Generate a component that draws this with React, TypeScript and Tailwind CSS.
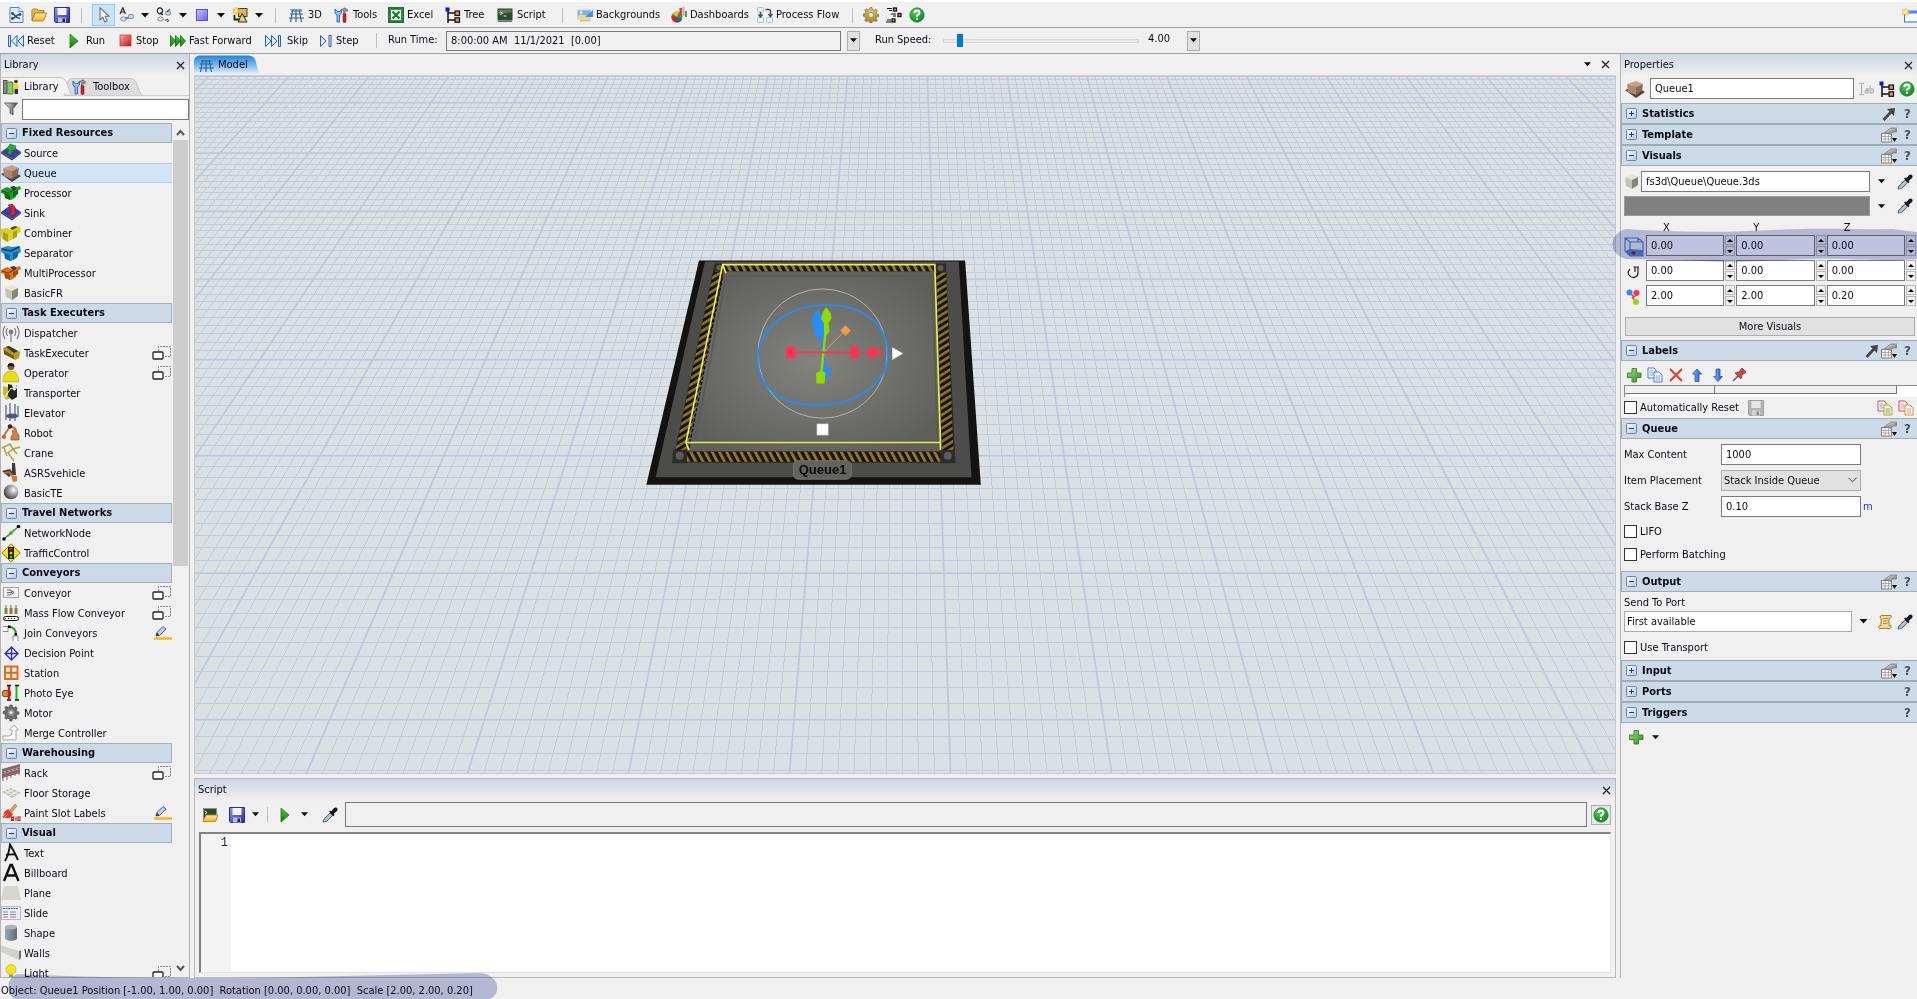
import React from "react";

type Kids = { children?: React.ReactNode };

function Ico({ w = 16, h = 16, vb, children }: Kids & { w?: number; h?: number; vb?: string }) {
  return (
    <svg width={w} height={h} viewBox={vb ?? `0 0 ${w} ${h}`} className="shrink-0" aria-hidden="true">
      {children}
    </svg>
  );
}

/* ---------- shared gradients ---------- */
function Defs() {
  return (
    <svg width="0" height="0" className="absolute" aria-hidden="true">
      <defs>
        <linearGradient id="gBlue" x1="0" y1="0" x2="1" y2="1"><stop offset="0" stopColor="#c4c4ff" /><stop offset="1" stopColor="#6a62e8" /></linearGradient>
        <linearGradient id="gRed" x1="0" y1="0" x2="1" y2="1"><stop offset="0" stopColor="#f6a9a4" /><stop offset="1" stopColor="#c50f12" /></linearGradient>
        <linearGradient id="gGreen" x1="0" y1="0" x2="0" y2="1"><stop offset="0" stopColor="#4fd028" /><stop offset="1" stopColor="#0c7a0c" /></linearGradient>
        <linearGradient id="gPlus" x1="0" y1="0" x2="1" y2="1"><stop offset="0" stopColor="#a6dc8c" /><stop offset="1" stopColor="#2f8f1f" /></linearGradient>
        <linearGradient id="gSave" x1="0" y1="0" x2="1" y2="1"><stop offset="0" stopColor="#8e93f0" /><stop offset="1" stopColor="#2c2f9c" /></linearGradient>
        <linearGradient id="gFold" x1="0" y1="0" x2="0" y2="1"><stop offset="0" stopColor="#ffe9a0" /><stop offset="1" stopColor="#f0b030" /></linearGradient>
        <linearGradient id="gArr" x1="0" y1="0" x2="1" y2="0"><stop offset="0" stopColor="#8fb8f8" /><stop offset="1" stopColor="#1e50c8" /></linearGradient>
        <linearGradient id="gBox" x1="0" y1="0" x2="1" y2="1"><stop offset="0" stopColor="#ffffff" /><stop offset="1" stopColor="#b4c4e4" /></linearGradient>
        <radialGradient id="gBall" cx=".68" cy=".35" r=".75"><stop offset="0" stopColor="#ffffff" /><stop offset=".4" stopColor="#a8a8a8" /><stop offset="1" stopColor="#383838" /></radialGradient>
        <radialGradient id="gHelp" cx=".4" cy=".3" r=".8"><stop offset="0" stopColor="#58d060" /><stop offset="1" stopColor="#067a1c" /></radialGradient>
        <radialGradient id="gGear" cx=".5" cy=".3" r=".8"><stop offset="0" stopColor="#e0cf78" /><stop offset="1" stopColor="#8a6a10" /></radialGradient>
        <radialGradient id="gFloor" cx=".5" cy=".5" r=".6"><stop offset="0" stopColor="#84847f" /><stop offset="1" stopColor="#5e5e5a" /></radialGradient>
        <linearGradient id="gCyl" x1="0" y1="0" x2="1" y2="0"><stop offset="0" stopColor="#9aa6b0" /><stop offset="1" stopColor="#5e6b77" /></linearGradient>
        <linearGradient id="gFun" x1="0" y1="0" x2="1" y2="0"><stop offset="0" stopColor="#f4f4f4" /><stop offset="1" stopColor="#3c3c3c" /></linearGradient>
        <linearGradient id="gGlove" x1="0" y1="0" x2="1" y2="1"><stop offset="0" stopColor="#e8e8e8" /><stop offset="1" stopColor="#6c6c6c" /></linearGradient>
        <pattern id="hatch" width="19" height="19" patternUnits="userSpaceOnUse" patternTransform="rotate(-28)"><rect width="19" height="19" fill="#15130c" /><rect width="9" height="19" fill="#917630" /></pattern>
        <pattern id="hatch2" width="17" height="17" patternUnits="userSpaceOnUse" patternTransform="rotate(58)"><rect width="17" height="17" fill="#15130c" /><rect width="8" height="17" fill="#8c7230" /></pattern>
      </defs>
    </svg>
  );
}

/* ---------- toolbar icons ---------- */
const NewIcon = () => (
  <Ico>
    <path d="M2 .5h9l4 4v11H2z" fill="#dfeefb" stroke="#5a86ac" />
    <path d="M11 .5v4h4" fill="#fff" stroke="#5a86ac" />
    <path d="M4 6.500c3 0 3 5 8 5M4 11.500c3 0 5-5 8-4" stroke="#2e4f6a" strokeWidth="1.500" fill="none" />
    <circle cx="4.500" cy="6.500" r="1.400" fill="#2e4f6a" /><circle cx="12" cy="7.500" r="1.400" fill="#2e4f6a" /><circle cx="4.500" cy="11.500" r="1.400" fill="#2e4f6a" />
  </Ico>
);
const FolderIcon = () => (
  <Ico>
    <path d="M.8 3.500 2 2h4l1.500 1.500H13V6H4L1 13z" fill="#e3b652" stroke="#a87412" strokeWidth=".8" />
    <path d="M4 6h11.500l-3 8H1z" fill="url(#gFold)" stroke="#b07a12" strokeWidth=".8" />
  </Ico>
);
const SaveIcon = ({ gray = false }: { gray?: boolean }) => (
  <Ico>
    <path d="M.5.5h15v15h-14l-1-1z" fill={gray ? "#b4b4b4" : "url(#gSave)"} stroke={gray ? "#a0a0a0" : "#2c2f8c"} />
    <rect x="3.500" y="1" width="9" height="7" fill={gray ? "#e8e8e8" : "#f4f6ff"} />
    <path d="M4 10.500h8v5H4z" fill={gray ? "#d6d6d6" : "#b9bcd8"} />
    <rect x="8.500" y="11.500" width="2.500" height="3.500" fill={gray ? "#8c8c8c" : "#22244c"} />
  </Ico>
);
const CursorIcon = () => (
  <Ico><path d="M4 .8v12l2.800-2.600 2 4.800 2.300-1-2-4.700H13z" fill="#fff" stroke="#6b7079" strokeWidth="1.100" /></Ico>
);
const ConnectIcon = ({ letter }: { letter: "A" | "Q" }) => (
  <Ico>
    {letter === "A"
      ? <path d="M1 7 3.800.8 6.500 7M2 5h3.600" stroke="#222" fill="none" strokeWidth="1.200" />
      : <path d="M6.500 3.800a2.600 3 0 1 1-5.200 0 2.600 3 0 1 1 5.200 0M4.500 5.500 6.800 8" stroke="#222" fill="none" strokeWidth="1.200" />}
    <ellipse cx="4.500" cy="12" rx="2.800" ry="2.100" fill="#dde4ec" stroke="#7f8fa3" />
    <ellipse cx="12" cy={letter === "A" ? 9.5 : 6} rx="2.800" ry="2.200" fill="#cfd9e6" stroke="#7f8fa3" />
    {letter === "A"
      ? <path d="M6.500 11.500 10 10.500" stroke="#6b7d94" strokeWidth="2" />
      : <path d="M9 13.500 12 12m-1 3 2-2m-2-8 3-3" stroke="#555" strokeWidth="1.100" />}
  </Ico>
);
const SquareIcon = () => <Ico><rect x="2.500" y="2.500" width="11" height="11" fill="url(#gBlue)" stroke="#5a52c8" /></Ico>;
const ShapesIcon = () => (
  <Ico>
    <rect x="6.500" y="1.500" width="8.500" height="8" fill="#d9b36a" stroke="#5b4215" />
    <path d="M10 6.500l5 8.500H6z" fill="#e8cc8c" stroke="#3b2a0c" />
    <path d="M2.500 8v4.500h5" fill="none" stroke="#222" strokeWidth="1.800" />
    <path d="m4 0 1 2.500L7.500 2 6 4l1.500 2L5 5.500 4 8 3 5.500.5 6 2 4 .5 2 3 2.500z" fill="#ffe46a" stroke="#e0a820" strokeWidth=".6" />
  </Ico>
);
const GridIcon = () => (
  <Ico>
    <path d="M3 4h11M2 7h13M1 11h15M5 2 2.500 15M8 2v13M11 2l2.500 13" stroke="#2f6299" strokeWidth="1.200" fill="none" />
    <path d="M2 2.500h12" stroke="#6fa0cc" />
  </Ico>
);
const ToolsIcon = () => (
  <Ico>
    <path d="M2 2v4l2 2v7h2.500V8l2-2V2L7 4.500H4z" fill="#9cc0f0" stroke="#2c5fae" strokeWidth=".9" />
    <path d="M8.500 2.500 12 .8l3 2.200-1 1.800-2-1v3h-1.500v-3z" fill="#8d9299" stroke="#555" strokeWidth=".5" />
    <rect x="10" y="6.500" width="3" height="9" rx="1" fill="#c8202a" stroke="#7c1016" strokeWidth=".5" />
  </Ico>
);
const ExcelIcon = () => (
  <Ico>
    <rect x=".8" y=".8" width="14.500" height="14.500" fill="#3e8f4b" stroke="#1f6a30" strokeWidth="1.500" />
    <rect x="3" y="3" width="10" height="10" fill="#eaf6ea" />
    <path d="m4.500 4.500 7 7m0-7-7 7" stroke="#1f7a35" strokeWidth="2.200" />
  </Ico>
);
const TreeIcon = () => (
  <Ico>
    <path d="M3 4v12M3 6h7M3 13h7" stroke="#111" strokeWidth="1.500" fill="none" />
    <rect x=".5" y=".5" width="4" height="4" fill="#0b10ee" />
    <rect x="10" y="4" width="4.500" height="4.500" fill="#c99b5e" stroke="#111" strokeWidth="1.200" />
    <rect x="10" y="10.800" width="4.500" height="4.500" fill="#c99b5e" stroke="#111" strokeWidth="1.200" />
  </Ico>
);
const ScriptIcon = () => (
  <Ico>
    <rect x=".5" y="1.500" width="15" height="12" rx="1" fill="#2c4a2e" stroke="#8f958f" />
    <path d="M1.500 2.500h13v3c-5 0-8 2-13 2z" fill="#5d7a5e" />
    <path d="m3 4.500 2.500 1.800L3 8M6.500 9h3" stroke="#e8f4e8" fill="none" />
    <path d="M1 14.500h14" stroke="#666" />
  </Ico>
);
const BackIcon = () => (
  <Ico>
    <rect x=".5" y="3" width="13" height="9" fill="#7fb2ea" stroke="#bcd4ee" />
    <path d="M1 9c4-3 6 1 12-2v5H1z" fill="#f2d88c" />
    <circle cx="4" cy="5.500" r="1.300" fill="#fff" />
    <path d="m8 10 8-7v7z" fill="#4f8fd8" /><path d="M3 13.500h10" stroke="#e6b84c" strokeWidth="1.500" />
  </Ico>
);
const DashIcon = () => (
  <Ico>
    <circle cx="6" cy="10" r="5.500" fill="#2a9d3c" />
    <path d="M6 10 1.500 6.500A5.500 5.500 0 0 1 8 4.800z" fill="#f2c12e" />
    <path d="M6 10v5.500A5.500 5.500 0 0 1 .5 9z" fill="#d4202a" /><path d="M6 10v5.500c2 0 4-1 5-3z" fill="#2b57c4" />
    <rect x="8.500" y="1" width="2.500" height="7" fill="#e23b3b" /><rect x="11.500" y="0" width="2" height="9" fill="#f29a9a" /><rect x="14" y="4" width="2" height="6" fill="#3aa655" />
  </Ico>
);
const FlowIcon = () => (
  <Ico>
    <rect x=".5" y=".5" width="6" height="4.500" rx="1" fill="#e4f3f6" stroke="#9fc3ca" />
    <rect x=".5" y="10.500" width="6" height="5" rx="1" fill="#e4f3f6" stroke="#9fc3ca" />
    <rect x="9.500" y="10.500" width="6" height="5" rx="1" fill="#e4f3f6" stroke="#9fc3ca" />
    <path d="M3.500 5v5m-2-2.500 2 2.500 2-2.500M8.500 2.500H12q1.500 0 1.500 2V9m-2-2 2 2.500L15.500 7" stroke="#4a4f55" fill="none" strokeWidth="1.500" />
  </Ico>
);
const gearPath = "M7 .5h2l.5 2 1.600.7 1.800-1 1.400 1.400-1 1.800.7 1.600 2 .5v2l-2 .5-.7 1.600 1 1.800-1.400 1.400-1.800-1-1.600.7-.5 2H7l-.5-2-1.600-.7-1.800 1-1.400-1.400 1-1.800L2 9.500l-2-.5v-2l2-.5.7-1.600-1-1.800 1.400-1.400 1.800 1L6.500 2.500z";
const GearIcon = () => <Ico><path d={gearPath} fill="url(#gGear)" stroke="#8f7526" strokeWidth=".6" /><circle cx="8" cy="8" r="2.600" fill="#f0f0f0" stroke="#7d6518" strokeWidth=".6" /></Ico>;
const SpeedIcon = () => (
  <Ico>
    <path d="M1 1.500h5M3 3.500h3M5 7h5M7 9h3M1 13h4M0 15h5" stroke="#111" />
    <rect x="7.500" y="1" width="3" height="3" fill="#e0a860" stroke="#111" strokeWidth="1.300" /><rect x="12" y="6.500" width="3" height="3" fill="#e0a860" stroke="#111" strokeWidth="1.300" /><rect x="6" y="12" width="3" height="3" fill="#e0a860" stroke="#111" strokeWidth="1.300" />
  </Ico>
);
const HelpIcon = () => (
  <Ico><circle cx="8" cy="8" r="7.200" fill="url(#gHelp)" stroke="#0a7a20" strokeWidth=".6" /><path d="M5.500 6q0-2.500 2.500-2.500T10.500 6Q10.500 7.200 8 8.600v1.200M8 11v2" stroke="#fff" strokeWidth="1.900" fill="none" /></Ico>
);
const WindowIcon = () => (
  <Ico w={15} h={15}>
    <rect x="2.500" y="4" width="14" height="10" fill="#f2f6fd" stroke="#4d6fb0" /><path d="M5 4h10" stroke="#4f86e8" strokeWidth="3" />
    <path d="m3.500 0 .8 2 2.200-.8-.8 2 2 .8-2 .8.800 2.200-2.200-.8-.8 2-.8-2-2.200.8.800-2.200-1.500-.8 1.500-.8L.5 1.200l2.200.8z" fill="#ffe878" stroke="#e0b83c" strokeWidth=".5" />
  </Ico>
);

const bar = { fill: "#dcebff", stroke: "#2a5fc0", strokeWidth: 1 };
const ResetIcon = () => <Ico><path d="M.5 2.500h2v11h-2zM9 2.500v11L3.500 8zM15.500 2.500v11L10 8z" {...bar} /></Ico>;
const RunIcon = () => <Ico w={10} h={16}><path d="m1 1 8 7-8 7z" fill="url(#gGreen)" stroke="#0b6a10" strokeWidth=".7" /></Ico>;
const StopIcon = () => <Ico w={13} h={14}><rect x="1" y="1" width="11" height="11" fill="url(#gRed)" stroke="#b83a3a" strokeWidth=".7" /></Ico>;
const FFIcon = () => <Ico><path d="m.5 2.500 5 5.500-5 5.500zM5.500 2.500l5 5.500-5 5.500zM10.500 2.500l5 5.500-5 5.500z" fill="url(#gGreen)" stroke="#0b6a10" strokeWidth=".8" /></Ico>;
const SkipIcon = () => <Ico><path d="M.5 2.500 6 8 .5 13.500zM6.500 2.500 12 8l-5.500 5.500zM13.500 2.500h2v11h-2z" {...bar} /></Ico>;
const StepIcon = () => <Ico w={12} h={16}><path d="M.5 2.500 6 8 .5 13.500zM9 2.500h2v11H9z" {...bar} /></Ico>;
const Caret = ({ w = 8 }: { w?: number }) => <Ico w={w} h={5} vb="0 0 8 5"><path d="M0 0h8L4 4.500z" fill="#111" /></Ico>;
const Cross = () => <Ico w={9} h={9}><path d="m1 1 7 7m0-7L1 8" stroke="#222" strokeWidth="1.300" /></Ico>;
const Filter = () => <Ico w={14} h={14}><path d="M.5 1h13L9 6.500V13L6 11V6.500z" fill="url(#gFun)" stroke="#555" strokeWidth=".9" /></Ico>;
const BooksIcon = () => (
  <Ico>
    <rect x=".5" y="1.500" width="3.500" height="13" fill="#8a8d90" stroke="#505356" /><rect x="4" y="3" width="6" height="12" rx="1" fill="#8cc46a" stroke="#4c7c34" />
    <circle cx="13" cy="2.500" r="1.800" fill="#4a3018" /><path d="M10.500 5h5v5h-5z" fill="#f4d81e" /><path d="M11.500 10h3.500v5h-3.500z" fill="#2a3452" />
  </Ico>
);
const Dropper = () => (
  <Ico>
    <path d="m1 15 1-3 6-6 2.500 2.500-6 6z" fill="#aebfce" stroke="#4e5b68" strokeWidth=".9" />
    <path d="m7 4.500 1.500-1 1 .8L12 1q2-1.200 3.200.2Q16 2.500 15 4l-3.200 2.800.7 1.200-1.200 1.200z" fill="#15171a" />
  </Ico>
);

/* ---------- library icons, 20 x 20 each ---------- */
const machine = (a: string, b: string, d: string) => (
  <>
    <path d="M0 7 6 4l5 2 8-3 1 3-4 2-1 6-5 3-6-2-1-4-3-1z" fill={a} />
    <path d="m4 10 5 2v5l-5-2zM12 9l5-2v4l-5 3z" fill={b} />
    <path d="m9 4 4-1 3 2-4 2z" fill={d} /><path d="m1 8 6 2 8-4" stroke={d} fill="none" strokeWidth=".9" />
  </>
);
const pad = <><path d="M0 9 10 2l10 7-9 7z" fill="#3c3ea6" /><path d="m0 9 11 7 9-7v1.500l-9 7-11-7z" fill="#3b3b3b" /></>;
const boxArt = (
  <>
    <path d="M0 11 10 7l10 6-9 6z" fill="#4b4542" />
    <path d="m2 5 9-3 7 3-7 3z" fill="#c79f89" /><path d="m2 5 9 3v8l-8-3z" fill="#b08871" /><path d="m18 5-7 3v8l6-4z" fill="#8e6b57" />
  </>
);
const cubeArt = <><path d="m4 5 7-3 6 3-6 3z" fill="#e4e4d8" /><path d="m4 5 7 3v9l-6-3z" fill="#c4c4b6" /><path d="m17 5-6 3v9l6-4z" fill="#84847a" /></>;
const art: Record<string, React.ReactNode> = {
  Source: <>{pad}<path d="M7 11 8 6 5 7l4-6 6 2-1 4-3 0-1 4z" fill="#2ea838" stroke="#137a1e" strokeWidth=".5" /></>,
  Queue: boxArt,
  Processor: machine("#1d9a2a", "#0c6a16", "#2b3a2b"),
  Sink: <>{pad}<path d="m7 2 4-1 3 3v5l2 0-4 4-4-3 2-1V5z" fill="#d8252c" stroke="#8c1014" strokeWidth=".5" /></>,
  Combiner: <><path d="m0 6 6-1 3 2 10-4 1 6-5 2-1 4-8 4-5-3-1-5z" fill="#d8d21c" /><path d="m2 9 5 2v8l-5-3zM12 9l4-2v7l-4 2z" fill="#aaa20c" /><path d="m9 5 5-2 3 1-6 3z" fill="#4b4a20" /></>,
  Separator: <><path d="m0 5 7-2 4 1 8-1 1 6-3 2-1 4-6 3-6-2-1-5-3-2z" fill="#1f93cf" /><path d="m4 10 5 2v6l-5-3zM12 10l5-2v5l-5 4z" fill="#0d6aa4" /><path d="m1 6 9 2 8-4" stroke="#14384e" strokeWidth="1.500" fill="none" /></>,
  MultiProcessor: machine("#d9701a", "#a04c08", "#4a3626"),
  BasicFR: cubeArt,
  Dispatcher: <g fill="none" stroke="#7d7d7d" strokeWidth="1.200"><path d="M4 3Q0 9 4 16M16 3q4 6 0 13M6.500 5q-2.500 4 0 8M13.500 5q2.500 4 0 8M10 10v9" /><circle cx="10" cy="9" r="1.800" fill="#7d7d7d" /></g>,
  TaskExecuter: <><path d="m2 5 5-2 12 6-1 6-4 2L3 11z" fill="#b89a1e" /><path d="m5 4 3-1 9 5-4 2z" fill="#3a3730" /><path d="m3 7 10 6v3L3 11z" fill="#6e5c14" /></>,
  Operator: <><circle cx="10" cy="4" r="3.200" fill="#8a5a3a" /><path d="M6.500 4q0-4 3.500-4t3.500 4q-3-2-7 0z" fill="#20160f" /><path d="M2 19q0-9 5-10.500h6Q17 10 18 19z" fill="#e6dc1a" stroke="#a89e08" strokeWidth=".5" /></>,
  Transporter: <><path d="m2 3 8 2v10l-5 2-3-6z" fill="#c6b92a" /><path d="M7 1v12l4 4 5-3V2l-3 6-2-6z" fill="#262622" /><path d="m4 14 6-9 4 2 3-5" stroke="#fff" fill="none" /></>,
  Elevator: <><path d="M5 2v15M9 0v18M14 1v17M17 3v11" stroke="#5c6c96" strokeWidth="1.300" /><ellipse cx="11" cy="13" rx="6" ry="2.500" fill="#4e5870" /></>,
  Robot: <><path d="m2 14 6-9M9 3l6 3" stroke="#c8763a" strokeWidth="2.200" /><path d="m11 8 4-2 1 4 2 2v5h-8v-3l2-3z" fill="#d08040" stroke="#7e4316" strokeWidth=".6" /><circle cx="9" cy="3.500" r="2.300" fill="#3a2a20" /><circle cx="3" cy="14" r="2" fill="#e05030" /></>,
  Crane: <path d="M1 5 9 1l3 5 7-2M3 5l3 8M12 6l-5 4 6 8M12 6l4 5" stroke="#b3a23c" strokeWidth="1.500" fill="none" />,
  ASRSvehicle: <><path d="M11 0h3l1 12h-4zM1 8l8-2 3 4-4 4z" fill="#3b3b3b" /><path d="m10 12 6 1v5l-4 1z" fill="#d0762e" /><path d="m3 10 5-1 3 3" stroke="#c26f30" strokeWidth="2" fill="none" /></>,
  BasicTE: <circle cx="10" cy="9" r="7.300" fill="url(#gBall)" />,
  NetworkNode: <><path d="M3 16 18 3" stroke="#222" /><path d="M6 13.500 14 6.500" stroke="#4fae3c" strokeWidth="2" /><circle cx="3" cy="16" r="1.800" /><circle cx="17.500" cy="3.500" r="1.800" /><circle cx="10" cy="10" r="1.800" fill="#46a832" /></>,
  TrafficControl: <><path d="m10 .8 9 9-9 9-9-9z" fill="#efe718" stroke="#7f7a06" /><rect x="7" y="4" width="6" height="12" fill="#1b1b1b" /><circle cx="10" cy="6" r="1.500" fill="#e41a1a" /><circle cx="10" cy="10" r="1.500" fill="#f0c018" /><circle cx="10" cy="14" r="1.500" fill="#1fc81f" /></>,
  Conveyor: <><rect x="2.500" y="4.500" width="15" height="10" fill="#f4f4f4" stroke="#a5a5a5" /><path d="M6 7h3l4 2.500L9 12H6M9 7l4 2.500M6 9.500h5" stroke="#666" fill="none" /></>,
  "Mass Flow Conveyor": <><path d="M5 2v8M10 2v8M15 2v8" stroke="#7d6a3a" strokeWidth="1" /><path d="M3.500 5h3v6h-3zM8.500 5h3v6h-3zM13.500 5h3v6h-3z" fill="#8f7a45" /><rect x="2.500" y="13.500" width="15" height="4" rx="2" fill="#fff" stroke="#111" /><path d="M4 15.500h12" stroke="#111" strokeDasharray="1 2" /></>,
  "Join Conveyors": <><path d="M2 3.500h5v5H2M12 18v-5h5v5" fill="#fff" stroke="#8a8a8a" /><path d="M8 4q7 0 7 8" stroke="#22a022" strokeWidth="2" fill="none" /><rect x="7" y="2.500" width="2.500" height="2.500" /><rect x="13.500" y="10" width="2.500" height="2.500" /></>,
  "Decision Point": <path d="m10.500 4 6.500 6.500-6.500 6.500L4 10.500zM10.500 4v13M4 10.500h13" stroke="#2430c8" fill="none" strokeWidth="1.300" />,
  Station: <path d="M4 3.500h12.500v12.500H4zM10.200 3.500v12.500M4 9.800h12.500" stroke="#e86a10" strokeWidth="2" fill="none" />,
  "Photo Eye": <><rect x="1.500" y="7.500" width="8" height="6" rx="1.500" fill="#c09448" stroke="#7b5820" /><path d="M8 3v13" stroke="#d41818" strokeWidth="2.500" /><path d="M15.500 3v14" stroke="#22b822" strokeWidth="2" /><path d="M6 2.500h4M14 2.500h4M6 17h4M14 17h4" stroke="#111" strokeWidth="1.500" /></>,
  Motor: <g transform="translate(2 1.500)"><path d={gearPath} fill="#6c6c6c" stroke="#444" strokeWidth=".6" /><circle cx="8" cy="8" r="3.500" fill="#8e8e8e" /><circle cx="8" cy="8" r="1.600" fill="#e8e8e8" /></g>,
  "Merge Controller": <path d="M2 13h6q3 0 3-4V7H8.500L13 2l4.500 5H15v10h-4q-1-1-3 0H2z" fill="#fbfbfb" stroke="#a8a8a8" />,
  Rack: <><path d="m1 6 18-5v3L1 9zM1 11l18-5v3L1 14z" fill="#7d6a64" /><path d="M2 6v12M6 5v12M10 4v11M14 3v10M18 2v10" stroke="#5f6f9c" /><path d="m1 10 18-5M1 14.500l18-5" stroke="#a8422e" /></>,
  "Floor Storage": <><path d="m1 9 9-4 10 5-9 5z" fill="#c2c2ba" /><path d="m4 8 10 5M7 6.500l10 5M4 11l9-5M8 13l9-5" stroke="#f4f4f0" /></>,
  "Paint Slot Labels": <><path d="m9 7 5-6 2 2-5 6z" fill="#d9a05a" stroke="#8e5c1c" strokeWidth=".5" /><path d="m3 9 4-3 5 5-3 4-7 0z" fill="#e83a28" /><path d="m1 14 4-4M3 15l4-4" stroke="#f6a090" /><g fill="none" stroke="#cc1c1c" strokeWidth="1.100"><rect x="10.500" y="14" width="2" height="3.500" /><path d="M15 13.500V18" /><rect x="17" y="14" width="2" height="3.500" /></g></>,
  Text: <path d="M4 18q4-7 5-16.500Q13 8 17 17M5 12q5-1 9-.5" stroke="#111" fill="none" strokeWidth="1.900" />,
  Billboard: <path d="M3 18 9.500 2h1.500L17.500 18M5.500 12.500h9.500" stroke="#111" fill="none" strokeWidth="2.400" />,
  Plane: <path d="M3 3h14l3 14H0z" fill="#d6d6cf" />,
  Slide: <><rect x=".5" y="3.500" width="19" height="13" fill="#ececf6" stroke="#b8b8cc" /><path d="M2 5.500h15" stroke="#555a78" strokeDasharray="2 .6" /><path d="M2 9h5M9 9h6M2 11.500h5M9 11.500h6M2 14h5M9 14h6" stroke="#83869c" /></>,
  Shape: <><path d="M4 4v12q6 4 12 0V4z" fill="url(#gCyl)" /><ellipse cx="10" cy="4" rx="6" ry="2.300" fill="#a8b4be" /></>,
  Walls: <><path d="m0 2 18 6v9L0 9z" fill="#d2d2cf" /><path d="m18 8 2-1v8l-2 2z" fill="#6e6e6a" /><path d="m0 2 2-1 18 6-2 1z" fill="#f0f0ee" /></>,
  Light: <><circle cx="10" cy="6.500" r="5" fill="#f2ea10" stroke="#b0a808" strokeWidth=".6" /><rect x="8" y="11.500" width="4" height="5" fill="#9a9a9a" /></>,
};

const CopyTag = () => <Ico w={20} h={16}><path d="M6.500 6V1.500h12v10h-6" fill="none" stroke="#888" strokeDasharray="2 1" /><rect x="1" y="7" width="10" height="7" rx="1" fill="#fff" stroke="#222" strokeWidth="1.300" /></Ico>;
const PenTag = () => <Ico w={20} h={16}><path d="m4 11 1-3.500 6-6 3 2.500-6.500 6.500z" fill="#b8cff0" stroke="#4c5f80" /><path d="m4 11 1-3.500 2.500 3z" fill="#333" /><path d="M2 13.500h18" stroke="#ffb010" strokeWidth="2.400" /></Ico>;

type Group = { title: string; items: [string, ("copy" | "pen")?][] };
const groups: Group[] = [
  { title: "Fixed Resources", items: [["Source"], ["Queue"], ["Processor"], ["Sink"], ["Combiner"], ["Separator"], ["MultiProcessor"], ["BasicFR"]] },
  { title: "Task Executers", items: [["Dispatcher"], ["TaskExecuter", "copy"], ["Operator", "copy"], ["Transporter"], ["Elevator"], ["Robot"], ["Crane"], ["ASRSvehicle"], ["BasicTE"]] },
  { title: "Travel Networks", items: [["NetworkNode"], ["TrafficControl"]] },
  { title: "Conveyors", items: [["Conveyor", "copy"], ["Mass Flow Conveyor", "copy"], ["Join Conveyors", "pen"], ["Decision Point"], ["Station"], ["Photo Eye"], ["Motor"], ["Merge Controller"]] },
  { title: "Warehousing", items: [["Rack", "copy"], ["Floor Storage"], ["Paint Slot Labels", "pen"]] },
  { title: "Visual", items: [["Text"], ["Billboard"], ["Plane"], ["Slide"], ["Shape"], ["Walls"], ["Light", "copy"]] },
];

const Fold = ({ open }: { open: boolean }) => (
  <Ico w={11} h={11}>
    <rect x=".5" y=".5" width="10" height="10" rx="1" fill="url(#gBox)" stroke="#6f83a8" />
    <path d={open ? "M3 5.500h5" : "M3 5.500h5M5.500 3v5"} stroke="#1c3c78" />
  </Ico>
);

/* ---------- toolbars ---------- */
const Sep = ({ c }: { c: string }) => <span className={`h-[15px] w-px shrink-0 bg-[#bdbdbd] ${c}`} />;

function Tool({ c = "", label, text, children }: Kids & { c?: string; label?: string; text?: string }) {
  return (
    <button type="button" aria-label={label} className={`flex h-[22px] shrink-0 items-center gap-1 whitespace-nowrap ${c}`}>
      {children}
      {text && <span>{text}</span>}
    </button>
  );
}

function MainToolbar() {
  return (
    <div className="flex h-[26px] items-center border-b border-[#a0a0a0] pt-[1px]">
      <Tool c="ml-2 w-[23px]" label="New"><NewIcon /></Tool>
      <Tool c="w-[23px]" label="Open"><FolderIcon /></Tool>
      <Tool c="w-[27px]" label="Save"><SaveIcon /></Tool>
      <Sep c="mr-[10px]" />
      <Tool c="w-[23px] justify-center border border-[#90c8f6] bg-[#cce4f7]" label="Select"><CursorIcon /></Tool>
      <Tool c="ml-[4px] w-[37px] !gap-[6px]" label="Connect"><ConnectIcon letter="A" /><Caret /></Tool>
      <Tool c="w-[38px] !gap-[7px]" label="Disconnect"><ConnectIcon letter="Q" /><Caret /></Tool>
      <Tool c="w-[38px] !gap-[7px]" label="Create box"><SquareIcon /><Caret /></Tool>
      <Tool c="w-[43px] !gap-[7px]" label="Create shape"><ShapesIcon /><Caret /></Tool>
      <Sep c="mr-[12px]" />
      <Tool c="w-[45px]" text="3D"><GridIcon /></Tool>
      <Tool c="w-[55px]" text="Tools"><ToolsIcon /></Tool>
      <Tool c="w-[57px] !gap-[3px]" text="Excel"><ExcelIcon /></Tool>
      <Tool c="w-[52px] !gap-[3px]" text="Tree"><TreeIcon /></Tool>
      <Tool c="w-[65px]" text="Script"><ScriptIcon /></Tool>
      <Sep c="mr-[14px]" />
      <Tool c="w-[94px] !gap-[3px]" text="Backgrounds"><BackIcon /></Tool>
      <Tool c="w-[86px] !gap-[3px]" text="Dashboards"><DashIcon /></Tool>
      <Tool c="w-[95px] !gap-[3px]" text="Process Flow"><FlowIcon /></Tool>
      <Sep c="mr-[10px]" />
      <Tool c="w-[23px]" label="Global preferences"><GearIcon /></Tool>
      <Tool c="w-[23px]" label="Fast rendering"><SpeedIcon /></Tool>
      <Tool label="Help"><HelpIcon /></Tool>
      <Tool c="ml-auto" label="Window"><WindowIcon /></Tool>
    </div>
  );
}

function RunToolbar() {
  return (
    <div className="flex h-[26px] items-center border-b border-[#a0a0a0]">
      <Tool c="ml-2 w-[61px] !gap-[3px]" text="Reset"><ResetIcon /></Tool>
      <Tool c="w-[50px] !gap-[7px]" text="Run"><RunIcon /></Tool>
      <Tool c="w-[51px]" text="Stop"><StopIcon /></Tool>
      <Tool c="w-[95px] !gap-[3px]" text="Fast Forward"><FFIcon /></Tool>
      <Tool c="w-[55px] !gap-[6px]" text="Skip"><SkipIcon /></Tool>
      <Tool c="w-[56px]" text="Step"><StepIcon /></Tool>
      <Sep c="mr-[11px]" />
      <label htmlFor="runtime" className="w-[58px] shrink-0 pb-[1px]">Run Time:</label>
      <input id="runtime" defaultValue="8:00:00 AM  11/1/2021  [0.00]" className="h-[20px] w-[395px] whitespace-pre border border-[#7a7a7a] bg-[#f0f0f0] px-1 outline-none" />
      <button type="button" aria-label="Run time options" className="ml-[6px] flex h-[20px] w-[13px] items-center justify-center border border-[#adadad] bg-[#e1e1e1]"><Caret w={7} /></button>
      <label htmlFor="speed" className="ml-[15px] w-[68px] shrink-0 pb-[1px]">Run Speed:</label>
      <input
        id="speed" type="range" min={0} max={100} defaultValue={7}
        className="h-[14px] w-[196px] appearance-none bg-transparent [&::-webkit-slider-runnable-track]:h-[4px] [&::-webkit-slider-runnable-track]:border [&::-webkit-slider-runnable-track]:border-[#d6d6d6] [&::-webkit-slider-runnable-track]:bg-[#e7eaea] [&::-webkit-slider-thumb]:mt-[-6px] [&::-webkit-slider-thumb]:h-[13px] [&::-webkit-slider-thumb]:w-[6px] [&::-webkit-slider-thumb]:appearance-none [&::-webkit-slider-thumb]:bg-[#0078d7]"
      />
      <span className="ml-[9px] w-[39px] pb-[3px]">4.00</span>
      <button type="button" aria-label="Run speed options" className="flex h-[20px] w-[13px] items-center justify-center border border-[#adadad] bg-[#e1e1e1]"><Caret w={7} /></button>
    </div>
  );
}

function PanelTitle({ text }: { text: string }) {
  return (
    <div className="flex h-[22px] shrink-0 items-center justify-between bg-linear-to-b from-[#cdd6e6] to-[#f0f0f0] pr-[4px] pl-[3px]">
      <h2>{text}</h2>
      <button type="button" aria-label={`Close ${text}`}><Cross /></button>
    </div>
  );
}

/* ---------- left panel ---------- */
function Library() {
  return (
    <aside className="flex w-[190px] shrink-0 flex-col border-x border-b border-[#b4b4b4]">
      <PanelTitle text="Library" />
      <div className="relative flex h-[20px] shrink-0 items-end" role="tablist">
        <svg width="188" height="20" className="absolute inset-0" aria-hidden="true">
          <path d="M63 19.500C67 10 66 2.500 71 2.500h58c6 0 6 5 8 9s2 8 6 8z" fill="#dcdcdc" stroke="#c4c4c4" />
          <path d="M0 1.500h58c7 0 7 5 9 9s2 9 5 9" fill="#f4f4f4" stroke="#c4c4c4" />
          <path d="M72 19.500h116" stroke="#d0d0d0" />
        </svg>
        <button type="button" role="tab" aria-selected="true" className="relative flex h-[18px] w-[70px] items-center gap-[5px] pl-[2px]"><BooksIcon />Library</button>
        <button type="button" role="tab" aria-selected="false" className="relative flex h-[18px] items-center gap-[6px]"><ToolsIcon />Toolbox</button>
      </div>
      <label className="flex h-[26px] shrink-0 items-center gap-[4px] pl-[3px]">
        <Filter />
        <input aria-label="Filter" className="h-[21px] min-w-0 flex-1 border border-[#7a7a7a] bg-white px-1 outline-none" />
      </label>
      <div className="flex min-h-0 flex-1 pt-[1px]">
        <div className="w-[171px] overflow-y-auto [scrollbar-width:none]">
          {groups.map((g) => (
            <section key={g.title}>
              <h3 className="flex h-[20px] items-center gap-[5px] border border-[#a3afbb] bg-[#ccd9e7] pl-[4px] font-bold"><Fold open />{g.title}</h3>
              <ul>
                {g.items.map(([name, tag]) => (
                  <li key={name}>
                    <button type="button" className={`flex h-[20px] w-full items-center gap-[3px] border-y text-left ${name === "Queue" ? "border-[#b5cfe7] bg-[#d1e5f7]" : "border-transparent"}`}>
                      <Ico w={20} h={20}>{art[name]}</Ico>
                      <span className="flex-1 pt-[2px]">{name}</span>
                      {tag === "copy" && <CopyTag />}
                      {tag === "pen" && <PenTag />}
                    </button>
                  </li>
                ))}
              </ul>
            </section>
          ))}
        </div>
        <div className="ml-[1px] flex w-[15px] flex-col items-center">
          <Ico w={9} h={17}><path d="M1 12 4.500 8 8 12" stroke="#555" strokeWidth="2" fill="none" /></Ico>
          <div className="flex w-full flex-1 flex-col"><div className="w-full basis-[52%] bg-[#cdcdcd]" /></div>
          <Ico w={9} h={17}><path d="M1 6l3.500 4L8 6" stroke="#555" strokeWidth="2" fill="none" /></Ico>
        </div>
      </div>
    </aside>
  );
}

/* ---------- 3D view ---------- */
const CX = 905;
const HORIZON = -609.6;
const spacing = (y: number) => 0.11655 * (y - HORIZON);

function Floor() {
  const minor: string[] = [];
  const major: string[] = [];
  for (let i = -160; i <= 160; i++) {
    const k = i / 10 + 0.286;
    const d = `M${(CX + spacing(70) * k).toFixed(1)} 70L${(CX + spacing(790) * k).toFixed(1)} 790`;
    (i % 10 === 0 ? major : minor).push(d);
  }
  for (let n = -60; n <= 30; n++) {
    const y = 1 / (0.001219 + 0.00000933 * n) + HORIZON;
    if (y < 70 || y > 790) continue;
    (n % 10 === 0 ? major : minor).push(`M0 ${y.toFixed(1)}H1917`);
  }
  return (
    <>
      <path d={minor.join("")} stroke="#c3cdda" strokeWidth="1" fill="none" shapeRendering="crispEdges" />
      <path d={major.join("")} stroke="#bdc9da" strokeWidth="1.700" fill="none" />
    </>
  );
}

function Scene() {
  return (
    <svg viewBox="195 76 1421 697" preserveAspectRatio="xMidYMid slice" className="h-full w-full" role="img" aria-label="Model view">
      <rect x="0" y="0" width="1917" height="999" fill="#dae0e3" />
      <Floor />
      <g transform="translate(620 240) scale(.33333)">
        <path d="M238 60H1037L1084 733H80z" fill="#131313" />
        <path d="M256 63H1018L1056 710H108z" fill="#4c4c4b" />
        <path d="M285 70H979L1008 667H158z" fill="#2b2b28" />
        <path d="M290 72H977V93H286z" fill="url(#hatch)" />
        <path d="M170 634H1000V664H164z" fill="url(#hatch)" />
        <path d="M281 95h28L203 632h-36z" fill="url(#hatch2)" />
        <path d="M950 95h30l22 537h-34z" fill="url(#hatch2)" />
        <path d="M313 93H946L966 632H200z" fill="url(#gFloor)" />
        <path d="M320 106H938L954 604H225z" fill="none" stroke="#5a5a57" strokeWidth="5" />
        <g fill="#2c2c2c"><path d="M284 69h30v24h-30zM946 69h34v26h-34zM160 628h42v40h-44zM963 628h42v40h-42z" /></g>
        <g fill="#5c5c5c"><circle cx="298" cy="81" r="8" /><circle cx="963" cy="82" r="9" /><circle cx="180" cy="646" r="12" /><circle cx="985" cy="646" r="12" /></g>
        <path d="M308 110 208 622" stroke="#0c0c0c" strokeWidth="4" strokeDasharray="10 6" fill="none" />
        <path d="M309 72H946L963 606H199zM309 72l10 26M199 606l9 22M963 606v22" fill="none" stroke="#ecf046" strokeWidth="5" />
        <circle cx="609" cy="339" r="194" fill="none" stroke="#b4b4b2" strokeWidth="3" />
        <path d="M414 350C420 260 510 194 620 193S800 250 805 335 720 492 600 494 414 440 414 350z" fill="none" stroke="#268cf4" strokeWidth="5.500" />
        <path d="M611 336 678 269" stroke="#f09a50" strokeWidth="3" /><path d="m678 254 16 16-16 16-16-16z" fill="#f29a50" />
        <path d="M598 265 621 400" stroke="#268cff" strokeWidth="7" />
        <path d="M592 207q14 14 25 38l-5 8 4 26-8 12h-18l-6-14v-20l-8-12q4-24 16-38zM612 386q10-10 20-3v24l-14 5z" fill="#268cff" />
        <path d="M619 262 605 400" stroke="#8cdc04" strokeWidth="7" /><path d="M620 200q16 16 16 34l-9 13 3 26-8 10h-8l-1-36-8-12q2-20 15-35zM589 398l8-5h16l5 5-3 31h-24z" fill="#8cdc04" />
        <path d="M500 336H718M730 336h20" stroke="#ff3450" strokeWidth="6" /><path d="M501 318h26v36h-26l-3-18zM693 318h24v36h-24zM748 317l49 19-49 18z" fill="#ff3450" />
        <path d="m818 320 33 19-33 19z" fill="#fff" stroke="#999" /><rect x="592" y="550" width="34" height="34" fill="#fff" stroke="#aaa" strokeWidth="2" />
        <rect x="522" y="661" width="173" height="55" rx="14" fill="#62625f" stroke="#767674" strokeWidth="3" />
      </g>
      <text x="823" y="474" textAnchor="middle" fontFamily="Liberation Sans, Arial, sans-serif" fontWeight="700" fontSize="13" fill="#0c0c0c">Queue1</text>
    </svg>
  );
}

function ModelView() {
  return (
    <section className="flex min-h-0 flex-1 flex-col">
      <div className="flex h-[22px] shrink-0 items-end justify-between border-b border-[#c5cde0]">
        <div className="relative flex h-[20px] w-[68px] items-center pl-[4px]">
          <svg width="68" height="20" className="absolute inset-0" aria-hidden="true">
            <defs><linearGradient id="gTab" x1="0" y1="0" x2="0" y2="1"><stop offset="0" stopColor="#1d86dc" /><stop offset=".5" stopColor="#7db9ec" /><stop offset="1" stopColor="#f2f6fb" /></linearGradient></defs>
            <path d="M0 20V6q0-5 6-5.500h48q7 0 8 7 2 10 5 12.500z" fill="url(#gTab)" />
          </svg>
          <span className="relative flex items-center gap-[4px]"><GridIcon />Model</span>
        </div>
        <div className="flex h-full items-center gap-[10px] pr-[6px]"><button type="button" aria-label="View list"><Caret w={7} /></button><button type="button" aria-label="Close view"><Cross /></button></div>
      </div>
      <div className="min-h-0 flex-1 border border-[#c4c8d0]"><Scene /></div>
    </section>
  );
}

function ScriptPanel() {
  return (
    <section className="mt-[4px] flex h-[200px] shrink-0 flex-col border border-[#b8b8b8]">
      <PanelTitle text="Script" />
      <div className="flex h-[27px] shrink-0 items-center pl-[7px]">
        <Tool c="w-[27px]" label="Open script">
          <Ico><rect x="1.500" y="1.500" width="13" height="11" fill="#2f4a31" stroke="#8c928c" /><path d="m3 4 2 1.500L3 7" stroke="#eef" fill="none" /><path d="M4 8h12l-2.500 6.500H.8z" fill="url(#gFold)" stroke="#b07a12" strokeWidth=".8" /></Ico>
        </Tool>
        <Tool c="w-[38px] !gap-[7px]" label="Save script"><SaveIcon /><Caret w={7} /></Tool>
        <Sep c="mr-[12px]" />
        <Tool c="w-[42px] !gap-[11px]" label="Run script"><RunIcon /><Caret w={7} /></Tool>
        <Tool c="w-[23px]" label="Sample object"><Dropper /></Tool>
        <input aria-label="Script result" className="h-[25px] min-w-0 flex-1 border border-[#7a7a7a] bg-[#f0f0f0] px-1 outline-none" />
        <button type="button" aria-label="Script help" className="mr-[4px] ml-[4px] flex h-[20px] w-[20px] items-center justify-center border border-[#adadad] bg-[#e8e8e8]"><HelpIcon /></button>
      </div>
      <div className="mx-[4px] mt-[4px] mb-[4px] flex min-h-0 flex-1 border border-t-2 border-l-2 border-[#e3e3e3] border-t-[#828282] border-l-[#828282] bg-white font-['Liberation_Mono',monospace] text-[12px] leading-[14px]">
        <div className="w-[30px] bg-[#f4f4f4] pt-[2px] pr-[3px] text-right text-[#2a1a50]">1</div>
        <textarea aria-label="Script code" className="min-w-0 flex-1 resize-none pt-[2px] outline-none" />
      </div>
    </section>
  );
}

/* ---------- right panel ---------- */
const Pin = () => <Ico><path d="M2.500 14 10 6" stroke="#444" strokeWidth="2.600" /><path d="M6 3 14 2l-1 8z" fill="#444" /></Ico>;
const Props = () => (
  <Ico>
    <rect x=".5" y="6.500" width="10" height="8.500" fill="#f6f6f6" stroke="#808080" /><path d="M.5 9.500h10M.5 12h10M4 6.500v8.500M7.500 6.500v8.500" stroke="#a0a0a0" strokeWidth=".8" />
    <path d="m3 6 4-3 3-2h5.500v4L12 5 9.500 7.500 7 6z" fill="url(#gGlove)" stroke="#777" strokeWidth=".7" /><path d="M11 11h5l-2.500 4z" fill="#111" />
  </Ico>
);
function Head({ text, open = true, pin = false, props = true }: { text: string; open?: boolean; pin?: boolean; props?: boolean }) {
  return (
    <h3 className="flex h-[21px] shrink-0 items-center gap-[5px] border-y border-l border-[#9fabb7] bg-[#ccd9e7] pl-[4px] font-bold">
      <Fold open={open} />
      <span className="flex-1">{text}</span>
      <span className="flex items-center gap-px">
        {pin && <button type="button" aria-label={`Pin ${text}`}><Pin /></button>}
        {props && <button type="button" aria-label={`${text} options`}><Props /></button>}
        <button type="button" aria-label={`${text} help`} className="w-[19px] text-center text-[13px] font-bold text-[#4a4f55]">?</button>
      </span>
    </h3>
  );
}

const field = "border border-[#7a7a7a] bg-white px-[4px] outline-none";

function Spin({ label, value }: { label: string; value: string }) {
  return (
    <div className="flex h-[21px] min-w-0 flex-1">
      <input aria-label={label} defaultValue={value} className={`${field} w-0 min-w-0 flex-1`} />
      <div className="flex w-[12px] shrink-0 flex-col gap-px px-[1px]">
        {["up", "down"].map((d) => (
          <button key={d} type="button" aria-label={`${label} ${d}`} className="flex flex-1 items-center justify-center border border-[#b8b8b8] bg-[#f0f0f0]">
            <Ico w={6} h={3}><path d={d === "up" ? "M0 3h6L3 0z" : "M0 0h6L3 3z"} /></Ico>
          </button>
        ))}
      </div>
    </div>
  );
}

function Triple({ name, values, icon }: { name: string; values: string[]; icon: React.ReactNode }) {
  return (
    <div className="mb-[4px] flex h-[21px] items-center">
      <span className="flex w-[22px] shrink-0 pt-[2px]">{icon}</span>
      <div className="flex min-w-0 flex-1">{values.map((v, i) => <Spin key={i} label={`${name} ${"XYZ"[i]}`} value={v} />)}</div>
    </div>
  );
}

function Check({ text, c = "" }: { text: string; c?: string }) {
  return (
    <label className={`flex h-[13px] items-center gap-[3px] ${c}`}>
      <input type="checkbox" className="size-[13px] appearance-none border border-[#333] bg-white" />
      {text}
    </label>
  );
}

const PlusIcon = () => <Ico><path d="M6 1.500h4.500V6H15v4.500h-4.500V15H6v-4.500H1.500V6H6z" fill="url(#gPlus)" stroke="#3c7c30" strokeWidth=".9" /></Ico>;
const Sheets = ({ a = "#3a6cc8", b = "#3a6cc8", f = "#fff", l = "#6a94dc" }: { a?: string; b?: string; f?: string; l?: string }) => (
  <Ico>
    <path d="M1 1h6l2 2v8H1z" fill="#fff" stroke={a} strokeWidth=".9" /><path d="M2.500 4h4M2.500 6h4M2.500 8h4" stroke={l} strokeWidth=".9" />
    <path d="M7 5h5l3 3v7H7z" fill={f} stroke={b} strokeWidth=".9" /><path d="M8.500 9h5M8.500 11h5M8.500 13h5" stroke={l} strokeWidth=".9" />
  </Ico>
);

function Properties() {
  return (
    <aside className="relative flex w-[297px] shrink-0 flex-col border-l border-[#b4b4b4]">
      <PanelTitle text="Properties" />
      <div className="flex h-[27px] shrink-0 items-center pb-[2px] pl-[4px]">
        <Ico w={20} h={20}>{boxArt}</Ico>
        <input aria-label="Object name" defaultValue="Queue1" className={`${field} ml-[5px] h-[21px] min-w-0 flex-1`} />
        <div className="flex w-[63px] items-center justify-between pr-[2px] pl-[4px]">
          <Ico><path d="M1 2.500h1.500q1 0 1 1v9q0 1-1 1H1M6 2.500H4.500q-1 0-1 1M6 13.500H4.500q-1 0-1-1" stroke="#a0a0a0" fill="none" /><path d="M10 7v5M7.500 8h2.500M10 9.500H8q-1 0-1 1.200T8 12h2M12 4.500V12h2q1.500 0 1.500-2T14 8h-2" stroke="#a0a0a0" fill="none" /></Ico>
          <TreeIcon /><HelpIcon />
        </div>
      </div>
      <Head text="Statistics" open={false} pin props={false} />
      <Head text="Template" open={false} />
      <Head text="Visuals" />
      <div className="flex h-[174px] shrink-0 flex-col pt-[5px] pl-[3px]">
        <div className="flex h-[21px] shrink-0 items-center">
          <Ico w={17} h={17} vb="3 1 17 17">{cubeArt}</Ico>
          <input aria-label="Shape file" defaultValue="fs3d\Queue\Queue.3ds" className={`${field} h-full min-w-0 flex-1`} />
          <div className="flex w-[47px] items-center justify-between pr-[4px] pl-[8px]"><Caret w={7} /><Dropper /></div>
        </div>
        <div className="mt-[4px] flex h-[20px] shrink-0 items-center">
          <button type="button" aria-label="Color" className="h-full flex-1 border border-[#9a9a9a] bg-[#808080]" />
          <div className="flex w-[47px] items-center justify-between pr-[4px] pl-[8px]"><Caret w={7} /><Dropper /></div>
        </div>
        <div className="mt-[4px] flex h-[15px] shrink-0 items-end pl-[22px]">
          {["X", "Y", "Z"].map((a) => <span key={a} className="flex-1 pl-[17px]">{a}</span>)}
        </div>
        <Triple name="Position" values={["0.00", "0.00", "0.00"]} icon={<Ico w={20} h={20}><path d="m1 14 5-2 13 1v6H6z" fill="#5b8fd0" /><path d="M1 1h13l5 4v14H6L1 14zM1 1l5 4h13M6 5v14M14 1v4" fill="none" stroke="#4d86cc" strokeWidth="1.200" /><circle cx="9.500" cy="16" r="2" fill="#b01c3c" /></Ico>} />
        <Triple name="Rotation" values={["0.00", "0.00", "0.00"]} icon={<Ico w={18} h={16}><path d="M6 5q-3 3-1 6t5 2.500q4-1 4-5V3M9.500 3H15M11 3v5" fill="none" stroke="#222" strokeWidth="1.200" /></Ico>} />
        <Triple name="Size" values={["2.00", "2.00", "0.20"]} icon={<Ico w={18} h={16}><path d="m6 4 4 4 4-4M8 8l4 5" stroke="#ff3450" strokeWidth="1.500" fill="none" /><circle cx="5.500" cy="3.500" r="3" fill="#2a90ff" /><circle cx="12.500" cy="4" r="3" fill="#ff3450" /><circle cx="12" cy="13" r="3" fill="#8cdc10" /></Ico>} />
        <button type="button" className="mt-[7px] mr-[2px] ml-[1px] h-[19px] shrink-0 border border-[#adadad] bg-[#e1e1e1]">More Visuals</button>
      </div>
      <Head text="Labels" pin />
      <div className="flex h-[57px] shrink-0 flex-col pl-[3px]">
        <div className="flex h-[24px] shrink-0 items-center gap-[5px] pt-[4px] pl-[2px]">
          <Tool label="Add label"><PlusIcon /></Tool>
          <Tool label="Copy label"><Sheets /></Tool>
          <Tool label="Delete label"><Ico><path d="m2 2 12 12M14 2 2 14" stroke="#e23a28" strokeWidth="2" /></Ico></Tool>
          <Tool label="Move up"><Ico><path d="M8 2l4.500 5H10v7.500H6V7H3.500z" fill="url(#gArr)" stroke="#1c48a8" strokeWidth=".7" /></Ico></Tool>
          <Tool label="Move down"><Ico><path d="M8 14.500 12.500 9.500H10V2H6v7.500H3.500z" fill="url(#gArr)" stroke="#1c48a8" strokeWidth=".7" /></Ico></Tool>
          <Tool label="Pin label"><Ico><path d="m2 14 5-5" stroke="#555" strokeWidth="1.500" /><path d="m4 6 4-1 3-4 4 4-4 3-1 4z" fill="#c4464c" stroke="#8a2428" strokeWidth=".7" /></Ico></Tool>
        </div>
        <div className="flex h-[12px] shrink-0 border-t border-l border-[#8a8a8a] bg-white pb-[3px]">
          <div className="w-[90px] border-r border-b border-[#777] bg-[#f0f0f0]" />
          <div className="w-[182px] border-r border-b border-[#777] bg-[#f0f0f0]" />
        </div>
        <div className="flex flex-1 items-center pr-[3px]">
          <Check text="Automatically Reset" />
          <span className="ml-[9px] flex-1"><SaveIcon gray /></span>
          <span className="flex gap-[5px]"><Sheets a="#c84040" b="#b89a18" f="#fff8b0" /><Sheets a="#d83030" b="#b89a18" l="#e88080" /></span>
        </div>
      </div>
      <Head text="Queue" />
      <div className="grid h-[132px] shrink-0 grid-cols-[97px_140px_1fr] content-start items-center gap-y-[5px] pt-[5px] pl-[3px]">
        <label htmlFor="maxc">Max Content</label>
        <input id="maxc" defaultValue="1000" className={`${field} h-[21px] w-[140px]`} /><span />
        <label htmlFor="place">Item Placement</label>
        <div className="relative h-[21px]">
          <select id="place" className="h-full w-full appearance-none border border-[#adadad] bg-[#e1e1e1] pl-[2px] outline-none"><option>Stack Inside Queue</option></select>
          <span className="pointer-events-none absolute top-[7px] right-[4px]"><Ico w={9} h={6}><path d="m.5.8 4 4 4-4" stroke="#444" fill="none" /></Ico></span>
        </div><span />
        <label htmlFor="base">Stack Base Z</label>
        <input id="base" defaultValue="0.10" className={`${field} h-[21px] w-[140px]`} />
        <a href="#units" className="pl-[2px] text-[#2a34b0]">m</a>
        <div className="col-span-3 mt-[3px] flex flex-col gap-[10px]"><Check text="LIFO" /><Check text="Perform Batching" /></div>
      </div>
      <Head text="Output" />
      <div className="flex h-[68px] shrink-0 flex-col pt-[3px] pl-[3px]">
        <label htmlFor="port" className="h-[16px] leading-[15px]">Send To Port</label>
        <div className="flex h-[21px] shrink-0 items-center">
          <input id="port" defaultValue="First available" className="h-full min-w-0 flex-1 border border-[#ababab] bg-white px-[2px] outline-none" />
          <div className="flex w-[65px] items-center justify-between pr-[4px] pl-[7px]">
            <Caret w={9} />
            <span className="flex gap-[4px]"><Ico><path d="M4 1.500h10q1 2-1 3h-1v7h2q0 3-1 3H2.500q-2-1.500 0-3H4v-7q-2-1.500 0-3z" fill="#f0d79a" stroke="#a87c2c" /><path d="M6 4.500h5M6 7h4.500M6 9.500h4.500" stroke="#b98d40" /></Ico><Dropper /></span>
          </div>
        </div>
        <Check text="Use Transport" c="mt-[9px]" />
      </div>
      <Head text="Input" open={false} />
      <Head text="Ports" open={false} props={false} />
      <Head text="Triggers" props={false} />
      <div className="flex items-center gap-[8px] pt-[3px] pl-[7px]"><Tool label="Add trigger"><PlusIcon /></Tool><Caret w={7} /></div>
      <svg width="305" height="40" className="pointer-events-none absolute top-[172px] right-0 mix-blend-multiply" aria-hidden="true">
        <path d="M14 3C60 6 110 7 160 4S250 4 280 3L305 6V33C270 36 240 32 200 33S120 38 70 34L14 33C-4 28-4 8 14 3z" fill="#c0c3e0" />
      </svg>
    </aside>
  );
}

export default function App() {
  return (
    <div className="flex h-screen flex-col overflow-hidden border-t-2 border-white bg-[#f0f0f0] font-['DejaVu_Sans_Condensed','Noto_Sans',sans-serif] text-[11px] leading-[14px] text-[#0a0a14]">
      <Defs />
      <MainToolbar />
      <RunToolbar />
      <main className="flex min-h-0 flex-1">
        <Library />
        <div className="mx-[4px] flex min-w-0 flex-1 flex-col">
          <ModelView />
          <ScriptPanel />
        </div>
        <Properties />
      </main>
      <footer className="relative flex h-[21px] shrink-0 items-end pb-px pl-[1px] whitespace-pre">
        <svg width="500" height="26" className="pointer-events-none absolute bottom-0 left-0 mix-blend-multiply" aria-hidden="true">
          <path d="M18 1C100 5 200 6 300 4L480 0C500 2 502 20 490 26H14C6 20 6 4 18 1z" fill="#c0c3e0" />
        </svg>
        <span>Object: Queue1 Position [-1.00, 1.00, 0.00]  Rotation [0.00, 0.00, 0.00]  Scale [2.00, 2.00, 0.20]</span>
      </footer>
    </div>
  );
}
